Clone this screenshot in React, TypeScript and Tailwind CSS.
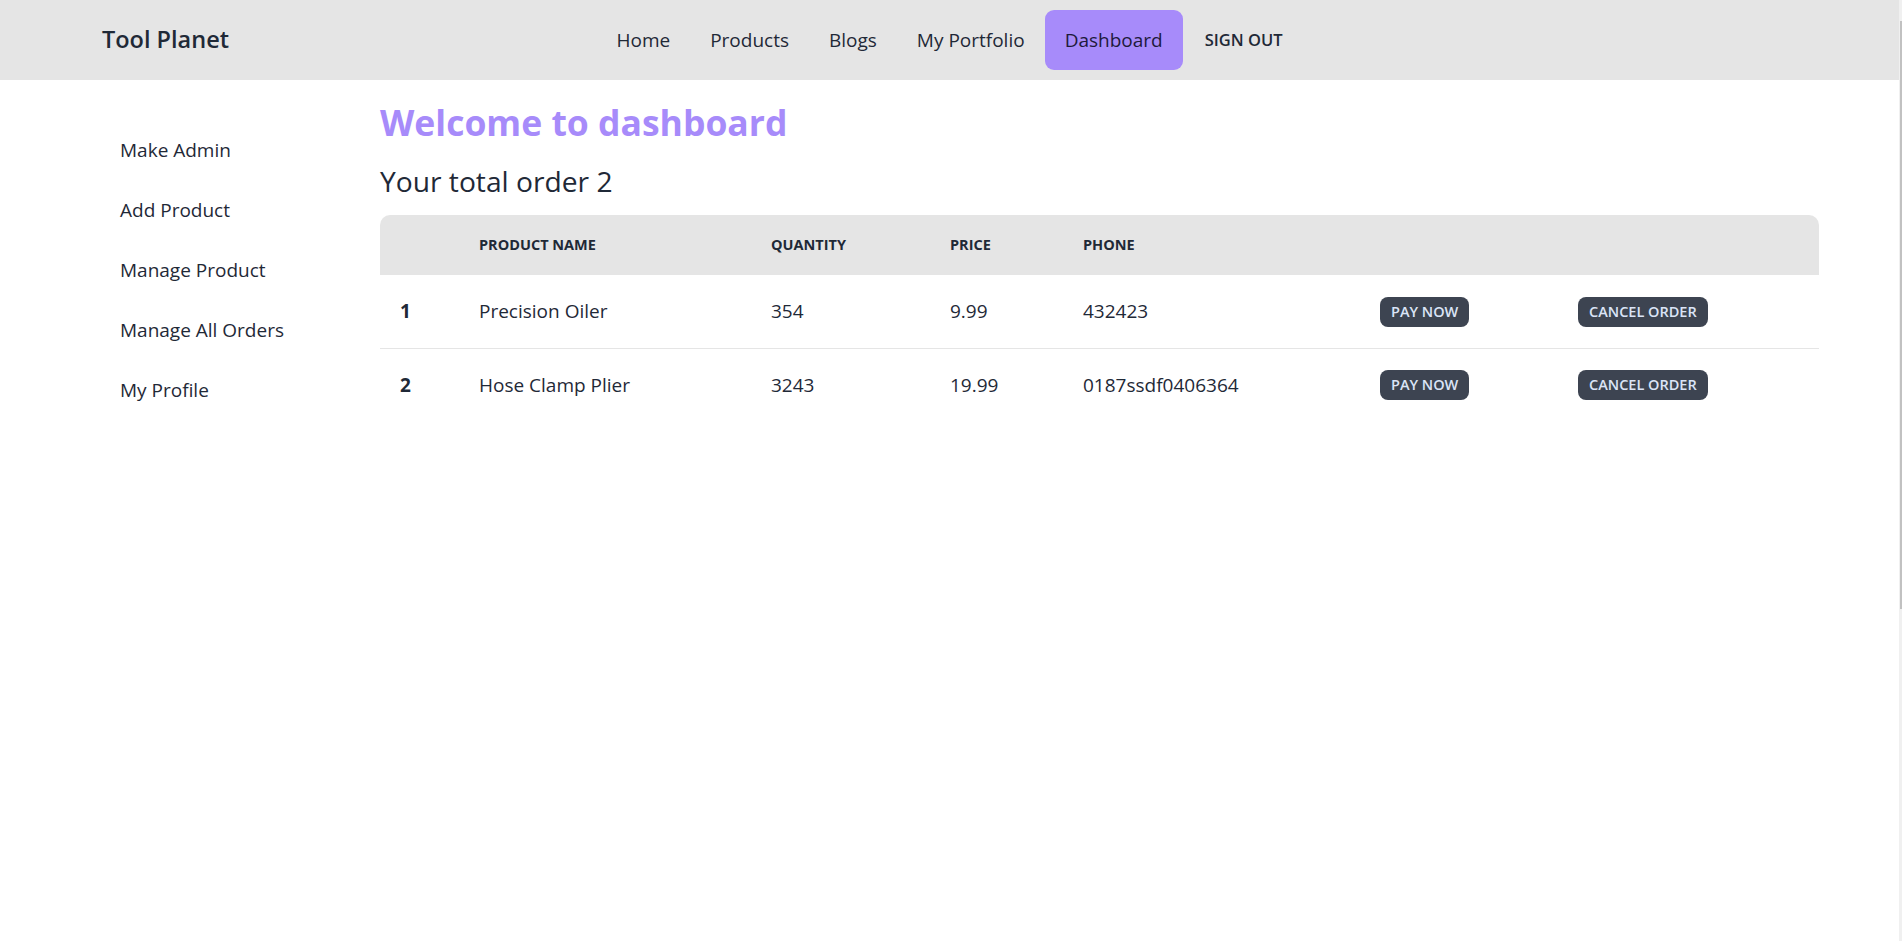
import React from 'react';

interface Order {
    id: number;
    name: string;
    quantity: string;
    price: string;
    phone: string;
}

const orders: Order[] = [
    { id: 1, name: 'Precision Oiler', quantity: '354', price: '9.99', phone: '432423' },
    { id: 2, name: 'Hose Clamp Plier', quantity: '3243', price: '19.99', phone: '0187ssdf0406364' },
];

const navLinks = ['Home', 'Products', 'Blogs', 'My Portfolio'];
const sideLinks = ['Make Admin', 'Add Product', 'Manage Product', 'Manage All Orders', 'My Profile'];

function Navbar() {
    return (
        <header className="flex h-[80px] items-center bg-[#e5e5e5]">
            <div className="flex flex-1 items-center">
                <span className="ml-[102px] text-[23.5px] font-semibold leading-none text-[#1f2937]">Tool Planet</span>
            </div>
            <nav className="flex shrink-0 items-center gap-[2px]">
                <ul className="flex items-center">
                    {navLinks.map(link => (
                        <li key={link} className="flex h-[60px] items-center px-[20px] text-[19px] text-[#1f2937]">
                            {link}
                        </li>
                    ))}
                    <li className="flex h-[60px] items-center rounded-[9px] bg-[#a78bfa] px-[20px] text-[19px] text-[#1e1a3c]">
                        Dashboard
                    </li>
                </ul>
                <button className="flex h-[60px] items-center px-[20px] text-[16.5px] font-semibold uppercase text-[#1f2937]">
                    Sign out
                </button>
            </nav>
            <div className="flex-1" />
        </header>
    );
}

function Sidebar() {
    return (
        <aside className="w-[380px] shrink-0 pl-[100px] pt-[40px]">
            <ul>
                {sideLinks.map(link => (
                    <li key={link} className="flex h-[60px] items-center px-[20px] text-[19px] text-[#1f2937]">
                        {link}
                    </li>
                ))}
            </ul>
        </aside>
    );
}

function OrdersTable() {
    // column widths follow the reference layout
    const th = "px-[20px] text-left align-middle text-[14.5px] font-bold uppercase text-[#1f2937]";
    const td = "px-[20px] align-middle text-[19px] text-[#1f2937]";
    const btn = "h-[30px] rounded-[8px] bg-[#3d4451] px-[11px] text-[14.5px] font-semibold uppercase text-[#dbe4f7]";

    return (
        <div className="mt-[14px] overflow-hidden rounded-t-[10px]">
            <table className="w-full table-fixed border-collapse">
                <thead>
                    <tr className="h-[60px] bg-[#e5e5e5]">
                        <th className={`${th} w-[79px]`}></th>
                        <th className={`${th} w-[292px]`}>Product Name</th>
                        <th className={`${th} w-[179px]`}>Quantity</th>
                        <th className={`${th} w-[133px]`}>Price</th>
                        <th className={`${th} w-[297px]`}>Phone</th>
                        <th className={`${th} w-[198px]`}></th>
                        <th className={th}></th>
                    </tr>
                </thead>
                <tbody>
                    {orders.map((order, i) => (
                        <tr
                            key={order.id}
                            className={i < orders.length - 1 ? "h-[73px] border-b border-[#e5e5e5]" : "h-[73px]"}
                        >
                            <td className={`${td} font-bold`}>{order.id}</td>
                            <td className={td}>{order.name}</td>
                            <td className={td}>{order.quantity}</td>
                            <td className={td}>{order.price}</td>
                            <td className={td}>{order.phone}</td>
                            <td className={td}>
                                <button className={btn}>Pay now</button>
                            </td>
                            <td className={td}>
                                <button className={btn}>Cancel order</button>
                            </td>
                        </tr>
                    ))}
                </tbody>
            </table>
        </div>
    );
}

export default function App() {
    return (
        <div className="flex min-h-screen bg-white font-['Open_Sans',sans-serif]">
            <div className="min-w-0 flex-1">
                <Navbar />
                <div className="flex">
                    <Sidebar />
                    <main className="min-w-0 flex-1 pr-[80px] pt-[20px]">
                        <h1 className="h-[45px] text-[35.5px] font-bold leading-[45px] text-[#a78bfa]">
                            Welcome to dashboard
                        </h1>
                        <h2 className="mt-[16px] h-[40px] text-[28.2px] leading-[40px] text-[#1f2937]">
                            Your total order {orders.length}
                        </h2>
                        <OrdersTable />
                    </main>
                </div>
            </div>
            {/* browser scrollbar edge */}
            <div className="flex w-[3px] shrink-0 justify-end bg-[#f0f0f0]">
                <div className="mt-[21px] h-[588px] w-[2px] bg-[#c1c1c1]" />
            </div>
        </div>
    );
}
